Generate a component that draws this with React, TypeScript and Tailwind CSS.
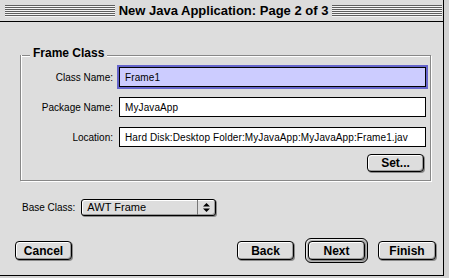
import React from 'react';

const font = { fontFamily: '"Liberation Sans", Arial, sans-serif' };

const Stripes = () => (
  <div className="flex-1 flex flex-col gap-[1px]">
    {[0, 1, 2, 3, 4, 5].map((i) => (
      <div key={i} className="h-[1px] bg-[#5e5e5e] shadow-[0_1px_0_#f4f4f4]" />
    ))}
  </div>
);

const Button = ({ label, w = 'w-[57px]' }: { label: string; w?: string }) => (
  <button
    className={`${w} h-[19px] rounded-[4px] border border-black bg-[#dddddd] shadow-[inset_1px_1px_0_#ffffff,inset_-1px_-1px_0_#9a9a9a,1px_1px_0_#8a8a8a] flex items-center justify-center text-[12px] font-bold text-black leading-none`}
  >
    {label}
  </button>
);

const Field = ({ value, focused = false }: { value: string; focused?: boolean }) => (
  <div
    className={`w-[307px] h-[20px] border border-black flex items-center px-[5px] overflow-hidden whitespace-nowrap text-[10px] tracking-[0.1px] text-black ${
      focused ? 'bg-[#ccccff] shadow-[0_0_0_2px_#6666cc]' : 'bg-white'
    }`}
  >
    {value}
  </div>
);

const Row = ({ label, children }: { label: string; children: React.ReactNode }) => (
  <div className="flex items-center h-[20px]">
    <div className="w-[92px] text-right text-[10px] text-black">{label}</div>
    <div className="ml-[6px]">{children}</div>
  </div>
);

export default function App() {
  return (
    <div className="w-[449px] h-[278px] bg-[#d2d2d2]" style={font}>
      <div className="w-[444px] h-[276px] flex flex-col bg-[#dddddd] border-r border-b border-black">
        {/* Title bar */}
        <div className="h-[22px] flex items-center pl-[5px] pr-[1px] bg-[#dcdcdc] border-b border-black">
          <Stripes />
          <span className="px-[4px] text-[13px] font-bold text-black leading-none">
            New Java Application: Page 2 of 3
          </span>
          <Stripes />
        </div>

        {/* Body */}
        <div className="flex-1 flex flex-col pt-[25px]">
          {/* Frame Class group */}
          <div className="ml-[20px] w-[411px] flex flex-col">
            <div className="flex items-center h-[12px]">
              <div className="w-[10px] mt-[6px] h-[2px] border-t border-[#888888] border-b border-b-white" />
              <span className="px-[3px] text-[12px] font-bold text-black leading-none">Frame Class</span>
              <div className="flex-1 mt-[6px] h-[2px] border-t border-[#888888] border-b border-b-white" />
            </div>
            <div className="-mt-[4px] border-l border-r border-b border-[#888888] shadow-[inset_1px_0_0_#ffffff,1px_1px_0_#ffffff] pt-[12px] pb-[8px] flex flex-col gap-[10px]">
              <Row label="Class Name:">
                <Field value="Frame1" focused />
              </Row>
              <Row label="Package Name:">
                <Field value="MyJavaApp" />
              </Row>
              <Row label="Location:">
                <Field value="Hard Disk:Desktop Folder:MyJavaApp:MyJavaApp:Frame1.jav" />
              </Row>
              <div className="flex justify-end pr-[6px] -mt-[3px]">
                <button className="w-[57px] h-[18px] rounded-[4px] border border-black bg-[#dddddd] shadow-[inset_1px_1px_0_#ffffff,inset_-1px_-1px_0_#9a9a9a,1px_1px_0_#8a8a8a] flex items-center justify-center text-[12px] font-bold text-black leading-none">
                  Set...
                </button>
              </div>
            </div>
          </div>

          {/* Base class */}
          <div className="flex items-center mt-[18px] ml-[22px]">
            <span className="text-[10px] text-black">Base Class:</span>
            <div className="ml-[6px] w-[135px] h-[17px] rounded-[3px] border border-black bg-[#dddddd] shadow-[inset_1px_1px_0_#ffffff,inset_-1px_-1px_0_#9a9a9a,1px_1px_0_#8a8a8a] flex items-center">
              <span className="flex-1 pl-[5px] text-[11px] text-black leading-none">AWT Frame</span>
              <div className="w-[18px] h-full border-l border-[#777777] flex items-center justify-center">
                <svg width="7" height="9" viewBox="0 0 7 9">
                  <path d="M3.5 0 L7 3.5 L0 3.5 Z" fill="#000" />
                  <path d="M0 5.5 L7 5.5 L3.5 9 Z" fill="#000" />
                </svg>
              </div>
            </div>
          </div>

          {/* Bottom buttons */}
          <div className="flex items-center h-[25px] mt-[22px] pl-[15px] pr-[7px]">
            <Button label="Cancel" />
            <div className="flex-1" />
            <Button label="Back" />
            <div className="ml-[11px] rounded-[6px] border border-black bg-[#b4b4b4] p-[2px] shadow-[inset_1px_1px_0_#e8e8e8]">
              <Button label="Next" />
            </div>
            <div className="ml-[10px]">
              <Button label="Finish" w="w-[58px]" />
            </div>
          </div>
        </div>
      </div>
    </div>
  );
}
